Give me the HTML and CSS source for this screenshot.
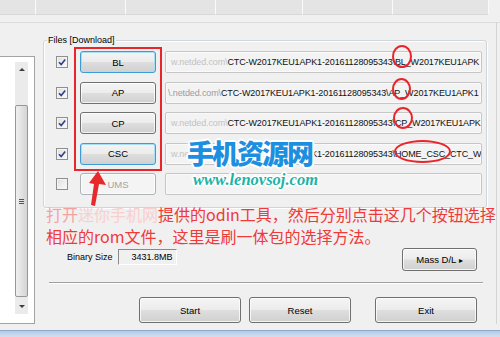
FILE: index.html
```html
<!DOCTYPE html>
<html lang="zh-CN">
<head>
  <meta charset="UTF-8">
  <title>Odin</title>
  <link rel="stylesheet" href="styles.css">
</head>
<body>

  <div class="window">
    <div class="tabs">
      <div class="tab"></div>
      <div class="tab"></div>
      <div class="tab"></div>
      <div class="tab"></div>
      <div class="tab"></div>
      <div class="tab"></div>
    </div>
    <div class="tabline"></div>

    <div class="main">
      <div class="listframe">
        <div class="scrollbar">
          <div class="sb-btn"><span class="arrow-up"></span></div>
          <div class="sb-gap"></div>
          <div class="sb-thumb"><span class="grip"></span></div>
          <div class="sb-fill"></div>
          <div class="sb-btn"><span class="arrow-down"></span></div>
        </div>
      </div>

      <div class="panel">
        <div class="group">
          <div class="group-title">Files [Download]</div>
          <div class="rows">
            <div class="file-row">
              <span class="check"><svg viewBox="0 0 10 10" width="10" height="10"><path d="M2 5.2 L4.2 7.6 L8.2 2.4" fill="none" stroke="#2d4189" stroke-width="1.6"/></svg></span>
              <button class="btn file-btn focused">BL</button>
              <div class="path"><span class="faded">w.netded.com\</span>CTC-W2017KEU1APK1-20161128095343\BL_W2017KEU1APK</div>
            </div>
            <div class="file-row">
              <span class="check"><svg viewBox="0 0 10 10" width="10" height="10"><path d="M2 5.2 L4.2 7.6 L8.2 2.4" fill="none" stroke="#2d4189" stroke-width="1.6"/></svg></span>
              <button class="btn file-btn">AP</button>
              <div class="path shifted"><span class="faded dark">\.netded.com\</span>CTC-W2017KEU1APK1-20161128095343\AP_W2017KEU1APK1</div>
            </div>
            <div class="file-row">
              <span class="check"><svg viewBox="0 0 10 10" width="10" height="10"><path d="M2 5.2 L4.2 7.6 L8.2 2.4" fill="none" stroke="#2d4189" stroke-width="1.6"/></svg></span>
              <button class="btn file-btn">CP</button>
              <div class="path"><span class="faded">w.netded.com\</span>CTC-W2017KEU1APK1-20161128095343\CP_W2017KEU1APK</div>
            </div>
            <div class="file-row">
              <span class="check"><svg viewBox="0 0 10 10" width="10" height="10"><path d="M2 5.2 L4.2 7.6 L8.2 2.4" fill="none" stroke="#2d4189" stroke-width="1.6"/></svg></span>
              <button class="btn file-btn focused">CSC</button>
              <div class="path"><span class="faded">w.ne</span><span class="covered">tded.com\CTC-W2017KEU1AP</span>K1-20161128095343\HOME_CSC_CTC_W</div>
            </div>
            <div class="file-row">
              <span class="check"></span>
              <button class="btn file-btn disabled">UMS</button>
              <div class="path"></div>
            </div>
          </div>
        </div>

        <div class="size-row">
          <span class="size-label">Binary Size</span>
          <span class="size-box">3431.8MB</span>
          <button class="btn mass-btn">Mass D/L <span class="tri">&#9656;</span></button>
        </div>

        <div class="separator"></div>

        <div class="actions">
          <button class="btn action-btn">Start</button>
          <button class="btn action-btn reset">Reset</button>
          <button class="btn action-btn exit">Exit</button>
        </div>
      </div>
    </div>

    <div class="frame-bottom"></div>

    <!-- annotations drawn over the screenshot -->
    <div class="mark-box"></div>
    <div class="ring ring-bl"></div>
    <div class="ring ring-ap"></div>
    <div class="ring ring-cp"></div>
    <div class="ring ring-csc"></div>

    <svg class="mark-arrow" width="22" height="42" viewBox="0 0 22 42">
      <polygon points="12,3 20,17 13,16 9,38 5,37 8,16 3,15" fill="#e8292b"/>
    </svg>

    <div class="watermark">
      <div class="wm-title">手机资源网</div>
      <div class="wm-url">www.lenovsoj.com</div>
    </div>

    <p class="note"><span class="pale">打开</span><span class="paler">迷你手机网</span>提供的odin工具，然后分别点击这几个按钮选择<br>相应的rom文件，这里是刷一体包的选择方法。</p>
  </div>

</body>
</html>
```

FILE: styles.css
```css
body {
  margin: 0;
  background-color: #f0f0f0;
  font-family: "Liberation Sans", Arial, sans-serif;
  font-size: 9px;
  color: #000;
}

.window {
  position: relative;
  width: 500px;
  height: 337px;
  overflow: hidden;
}

/* top strip */
.tabs {
  display: flex;
  height: 15px;
}

.tab {
  flex: none;
  box-sizing: border-box;
  background-color: #e4e4e4;
  border-right: 1px solid #fafafa;
  border-bottom: 1px solid #d8d8d8;
}

.tab:nth-child(1) { width: 36px; }
.tab:nth-child(2) { width: 90px; }
.tab:nth-child(3) { width: 90px; }
.tab:nth-child(4) { width: 87px; }
.tab:nth-child(5) { width: 90px; }
.tab:nth-child(6) { width: 96px; }

.tabline {
  margin-top: 7px;
  border-top: 1px solid #dcdcdc;
}

.main {
  display: flex;
  height: 301px;
}

/* left list */
.listframe {
  flex: none;
  box-sizing: border-box;
  width: 35px;
  height: 268px;
  margin-top: 33px;
  padding: 5px 6px 9px 15px;
  background-color: #fff;
  border: 1px solid #a3a3a3;
  border-left: 0;
}

.scrollbar {
  height: 100%;
  display: flex;
  flex-direction: column;
  background-color: #ebebeb;
}

.sb-btn {
  height: 15px;
  display: flex;
  align-items: center;
  justify-content: center;
}

.arrow-up,
.arrow-down {
  width: 0;
  height: 0;
  border-left: 3px solid transparent;
  border-right: 3px solid transparent;
}

.arrow-up {
  border-bottom: 3px solid #3d3d3d;
}

.arrow-down {
  border-top: 3px solid #3d3d3d;
}

.sb-gap {
  height: 28px;
}

.sb-thumb {
  height: 192px;
  box-sizing: border-box;
  border: 1px solid #979797;
  border-radius: 2px;
  background: linear-gradient(90deg, #f0f0f0, #d4d4d4);
  display: flex;
  align-items: center;
  justify-content: center;
}

.grip {
  width: 5px;
  height: 5px;
  background: repeating-linear-gradient(#555 0 1px, transparent 1px 2px);
}

.sb-fill {
  flex: 1;
}

/* right panel */
.panel {
  flex: 1;
  margin-right: 3px;
  border-right: 1px solid #d4d4d4;
  display: flex;
  flex-direction: column;
}

.group {
  box-sizing: border-box;
  width: 444px;
  height: 168px;
  margin: 17px 0 0 8px;
  border: 1px solid #d0d5d9;
  border-radius: 3px;
  box-shadow: inset 1px 1px 0 #fff, 1px 1px 0 #fff;
}

.group-title {
  width: max-content;
  margin: -6px 0 0 3px;
  padding: 0 1px;
  line-height: 11px;
  background-color: #f0f0f0;
}

.rows {
  display: flex;
  flex-direction: column;
  gap: 8.5px;
  padding: 5px 0 0 12px;
}

.file-row {
  display: flex;
  align-items: center;
  height: 22px;
}

.check {
  flex: none;
  box-sizing: border-box;
  width: 12px;
  height: 12px;
  margin-right: 12px;
  border: 1px solid #8e8f8f;
  background: linear-gradient(135deg, #dedede, #fbfbfb);
  box-shadow: inset 0 0 0 1px #f4f4f4;
  display: flex;
  align-items: center;
  justify-content: center;
}

.btn {
  box-sizing: border-box;
  padding: 0;
  font-family: "Liberation Sans", Arial, sans-serif;
  font-size: 9.5px;
  color: #000;
  border: 1px solid #707070;
  border-radius: 3px;
  background: linear-gradient(#f4f4f4 0%, #ececec 48%, #dedede 52%, #d0d0d0 100%);
  box-shadow: inset 0 0 0 1px rgba(255, 255, 255, 0.75);
}

.file-btn {
  flex: none;
  width: 76px;
  height: 22px;
  margin-right: 9px;
}

.focused {
  border-color: #3d9bd6;
  box-shadow: inset 0 0 0 1px #a8def6;
}

.disabled {
  color: #a3a3a3;
  border-color: #adb2b5;
  background: #f4f4f4;
}

.path {
  flex: none;
  box-sizing: border-box;
  width: 317px;
  height: 22px;
  padding-left: 5px;
  line-height: 20px;
  letter-spacing: -0.12px;
  white-space: nowrap;
  overflow: hidden;
  color: #111;
  background-color: #f3f3f3;
  border: 1px solid #c6c6c6;
  border-radius: 2px;
  box-shadow: inset 0 0 0 1px #fafafa;
}

.path.shifted {
  padding-left: 2px;
}

.faded {
  color: #c2c2c2;
}

.faded.dark {
  color: #9c9c9c;
}

.covered {
  color: transparent;
}

/* binary size row */
.size-row {
  display: flex;
  align-items: flex-start;
  height: 23px;
  margin-top: 40px;
  padding-left: 32px;
}

.size-label {
  margin-top: 1px;
  line-height: 16px;
}

.size-box {
  box-sizing: border-box;
  width: 59px;
  height: 16px;
  margin: 1px 0 0 5px;
  padding-right: 3px;
  line-height: 14px;
  text-align: right;
  border: 1px solid;
  border-color: #8a8a8a #fff #fff #8a8a8a;
  background-color: #f0f0f0;
}

.mass-btn {
  width: 75px;
  height: 23px;
  margin: 0 19px 0 auto;
}

.tri {
  font-size: 8px;
}

.separator {
  width: 434px;
  margin: 11px 0 0 14px;
  border-top: 1px solid #a0a0a0;
  border-bottom: 1px solid #fff;
}

.actions {
  display: flex;
  margin-top: 13px;
  padding-left: 104px;
}

.action-btn {
  width: 102px;
  height: 26px;
}

.reset {
  margin-left: 8px;
}

.exit {
  margin-left: 24px;
}

.frame-bottom {
  height: 7px;
  margin-top: 6px;
  border-top: 1px solid #8ea8c8;
  box-sizing: border-box;
  background: linear-gradient(#b4cae4, #cfdff1);
}

/* red annotations */
.mark-box {
  position: absolute;
  left: 74px;
  top: 47px;
  width: 88px;
  height: 124px;
  box-sizing: border-box;
  border: 2px solid #e8252b;
}

.ring {
  position: absolute;
  box-sizing: border-box;
  border: 2px solid #e8252b;
  border-radius: 50%;
}

.ring-bl { left: 392px; top: 45px; width: 20px; height: 23px; }
.ring-ap { left: 392px; top: 78px; width: 19px; height: 22px; }
.ring-cp { left: 393px; top: 107px; width: 20px; height: 22px; }
.ring-csc { left: 394px; top: 140px; width: 57px; height: 23px; }

.mark-arrow {
  position: absolute;
  left: 86px;
  top: 168px;
}

.watermark {
  position: absolute;
  left: 187px;
  top: 137px;
}

.wm-title {
  font-family: "Noto Sans CJK SC", sans-serif;
  font-weight: 900;
  font-size: 27px;
  line-height: 32px;
  letter-spacing: -2px;
  color: #1c8fe0;
  text-shadow: 1px 1px 0 #fff, -1px -1px 0 #fff, 1px -1px 0 #fff, -1px 1px 0 #fff,
    2px 0 0 #fff, -2px 0 0 #fff, 0 2px 0 #fff, 0 -2px 0 #fff;
}

.wm-url {
  margin: 1px 0 0 6px;
  font-family: "Liberation Serif", serif;
  font-style: italic;
  font-weight: bold;
  font-size: 16.5px;
  line-height: 20px;
  color: #1db3a6;
  text-shadow: 1px 1px 0 #fff, -1px -1px 0 #fff, 1px -1px 0 #fff, -1px 1px 0 #fff,
    2px 0 0 #fff, -2px 0 0 #fff, 0 2px 0 #fff, 0 -2px 0 #fff;
}

.note {
  position: absolute;
  left: 46px;
  top: 203px;
  width: 460px;
  margin: 0;
  font-family: "Noto Sans CJK SC", sans-serif;
  font-size: 16px;
  line-height: 22px;
  white-space: nowrap;
  color: #ef3a3a;
}

.pale {
  color: #f3a2a2;
}

.paler {
  color: #f8cfcf;
}
```
